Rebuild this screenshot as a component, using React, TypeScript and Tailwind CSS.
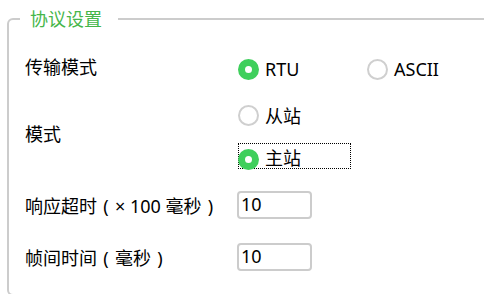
import React, { useState } from "react";

type Mode = "slave" | "master";
type Transport = "RTU" | "ASCII";

const FONT = { fontFamily: '"Noto Sans", "Noto Sans CJK SC", sans-serif' };

function Paren({ children }: { children: React.ReactNode }) {
  // full-width bracket with the glyph centred in its em box
  return <span className="inline-block w-[18px] text-center">{children}</span>;
}

function Radio({
  label,
  checked,
  onSelect,
  focused = false,
  className = "",
}: {
  label: string;
  checked: boolean;
  onSelect: () => void;
  focused?: boolean;
  className?: string;
}) {
  return (
    <button
      type="button"
      role="radio"
      aria-checked={checked}
      onClick={onSelect}
      className={`relative flex items-center gap-[6px] h-[28px] text-left ${className}`}
    >
      {focused && (
        <span className="absolute left-0 top-[-1px] w-[113px] h-[26px] border border-dotted border-black" />
      )}
      <span
        className={`block w-[21px] h-[21px] rounded-full shrink-0 ${
          checked ? "border-[7px] border-[#3fcf5c]" : "border-2 border-[#cfcfcf]"
        } ${focused ? "translate-y-[2px]" : ""}`}
      />
      <span className="text-[18px] leading-none text-black">{label}</span>
    </button>
  );
}

export default function App() {
  const [transport, setTransport] = useState<Transport>("RTU");
  const [mode, setMode] = useState<Mode>("master");
  const [timeout, setTimeoutVal] = useState("10");
  const [frameGap, setFrameGap] = useState("10");

  return (
    <div className="w-[484px] h-[294px] overflow-hidden bg-white" style={FONT}>
      <fieldset className="ml-[7px] mt-[7px] w-[540px] h-[289px] border-2 border-[#cccccc] rounded-md">
        <legend className="ml-[11px] pl-[10px] pr-[16px] text-[18px] leading-[24px] text-[#45b649]">
          协议设置
        </legend>

        <div className="flex flex-col pl-[16px]">
          {/* 传输模式 */}
          <div className="mt-[20px] h-[36px] flex items-center">
            <div className="w-[213px] text-[18px] text-black pb-[4px]">传输模式</div>
            <div role="radiogroup" className="flex items-center">
              <Radio
                label="RTU"
                checked={transport === "RTU"}
                onSelect={() => setTransport("RTU")}
                className="w-[129px]"
              />
              <Radio
                label="ASCII"
                checked={transport === "ASCII"}
                onSelect={() => setTransport("ASCII")}
              />
            </div>
          </div>

          {/* 模式 */}
          <div className="mt-[10px] h-[78px] flex items-center">
            <div className="w-[213px] text-[18px] text-black pb-[4px]">模式</div>
            <div role="radiogroup" className="flex flex-col gap-[14px] pt-[1px]">
              <Radio label="从站" checked={mode === "slave"} onSelect={() => setMode("slave")} />
              <Radio
                label="主站"
                checked={mode === "master"}
                onSelect={() => setMode("master")}
                focused
              />
            </div>
          </div>

          {/* 响应超时 */}
          <div className="mt-[12px] h-[36px] flex items-center">
            <div className="w-[212px] text-[18px] text-black pt-[2px] whitespace-nowrap">
              响应超时<Paren>(</Paren>× 100 毫秒<Paren>)</Paren>
            </div>
            <input
              value={timeout}
              onChange={(e) => setTimeoutVal(e.target.value)}
              className="w-[75px] h-[28px] border-2 border-[#cccccc] rounded-sm px-[2px] pb-[3px] text-[18px] text-black outline-none"
            />
          </div>

          {/* 帧间时间 */}
          <div className="mt-[16px] h-[36px] flex items-center">
            <div className="w-[212px] text-[18px] text-black pt-[3px] whitespace-nowrap">
              帧间时间<Paren>(</Paren>毫秒<Paren>)</Paren>
            </div>
            <input
              value={frameGap}
              onChange={(e) => setFrameGap(e.target.value)}
              className="w-[75px] h-[28px] border-2 border-[#cccccc] rounded-sm px-[2px] pb-[3px] text-[18px] text-black outline-none"
            />
          </div>
        </div>
      </fieldset>
    </div>
  );
}
